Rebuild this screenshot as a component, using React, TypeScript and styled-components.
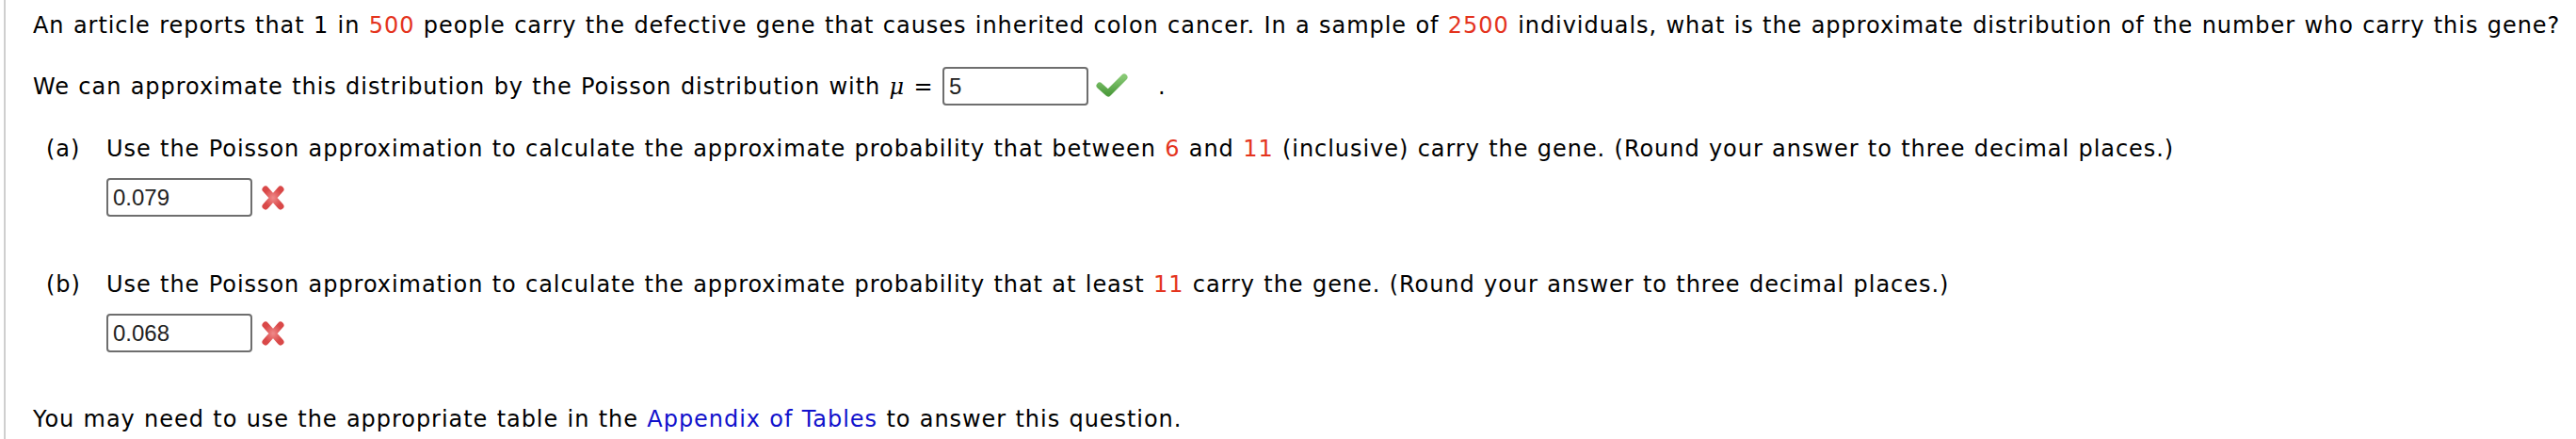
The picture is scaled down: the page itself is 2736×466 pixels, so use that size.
import styled, { createGlobalStyle } from "styled-components"

const GlobalStyle = createGlobalStyle`
    body {
        margin: 0;
        background: #ffffff;
    }
`

const Page = styled.div`
    padding-left: 4px;
    height: 466px;
`

const Panel = styled.div`
    border-left: 2px solid #cfcfcf;
    padding: 13px 0 0 29px;
    height: 466px;
    box-sizing: border-box;
    font-family: "DejaVu Sans", Verdana, sans-serif;
    font-size: 24px;
    line-height: 28px;
    letter-spacing: 0.95px;
    word-spacing: 0.8px;
    color: #000;
`

const Para = styled.p<{ $top?: number }>`
    margin: ${({ $top }) => $top ?? 0}px 0 0 0;
    white-space: nowrap;
`

const Red = styled.span`
    color: #e4341e;
`

const Link = styled.a`
    color: #1111cc;
    text-decoration: none;
`

const Mu = styled.span`
    font-family: "DejaVu Serif", serif;
    font-style: italic;
`

const Period = styled.span`
    margin-left: 32px;
`

const AnswerBox = styled.span`
    display: inline-block;
    box-sizing: border-box;
    width: 155px;
    height: 41px;
    border: 2px solid #6e6e6e;
    border-radius: 4px;
    padding: 0 0 0 5px;
    font-family: "Liberation Sans", Arial, sans-serif;
    font-size: 24px;
    line-height: 37px;
    letter-spacing: normal;
    word-spacing: normal;
    color: #222;
    vertical-align: baseline;
`

const Part = styled.div<{ $top: number }>`
    display: grid;
    grid-template-columns: 64px auto;
    margin: ${({ $top }) => $top}px 0 0 14px;
    white-space: nowrap;
`

const PartLabel = styled.span``

const PartBody = styled.div`
    display: flex;
    flex-flow: column nowrap;
`

const AnswerRow = styled.div`
    display: flex;
    align-items: center;
    gap: 9px;
    margin-top: 17px;
`

const Mark = styled.svg<{ $inline?: boolean }>`
    display: inline-block;
    flex-shrink: 0;
    vertical-align: ${({ $inline }) => ($inline ? "-4px" : "baseline")};
    margin-left: ${({ $inline }) => ($inline ? "8px" : "0")};
`

const CheckIcon = () => (
    <Mark $inline width="34" height="26" viewBox="0 0 34 26">
        <defs>
            <linearGradient id="chk" x1="0" y1="0" x2="0" y2="1">
                <stop offset="0" stopColor="#86c873" />
                <stop offset="1" stopColor="#4f9d3f" />
            </linearGradient>
        </defs>
        <polyline
            points="4,13 13,21 30,4"
            fill="none"
            stroke="url(#chk)"
            strokeWidth="7"
            strokeLinecap="round"
            strokeLinejoin="round"
        />
    </Mark>
)

const CrossIcon = () => (
    <Mark width="26" height="28" viewBox="0 0 26 28">
        <defs>
            <radialGradient id="crs" cx="0.5" cy="0.5" r="0.6">
                <stop offset="0" stopColor="#f08a8a" />
                <stop offset="1" stopColor="#d94848" />
            </radialGradient>
        </defs>
        <path
            d="M5 5 L21 23 M21 5 L5 23"
            fill="none"
            stroke="url(#crs)"
            strokeWidth="7"
            strokeLinecap="round"
        />
    </Mark>
)

export default function App() {
    return (
        <Page>
            <GlobalStyle />
            <Panel>
                <Para>
                    An article reports that 1 in <Red>500</Red> people carry the defective gene
                    that causes inherited colon cancer. In a sample of <Red>2500</Red> individuals,
                    what is the approximate distribution of the number who carry this gene?
                </Para>
                <Para $top={30}>
                    We can approximate this distribution by the Poisson distribution with <Mu>μ</Mu> ={" "}
                    <AnswerBox>5</AnswerBox>
                    <CheckIcon />
                    <Period>.</Period>
                </Para>
                <Part $top={32}>
                    <PartLabel>(a)</PartLabel>
                    <PartBody>
                        <span>
                            Use the Poisson approximation to calculate the approximate probability
                            that between <Red>6</Red> and <Red>11</Red> (inclusive) carry the gene.
                            (Round your answer to three decimal places.)
                        </span>
                        <AnswerRow>
                            <AnswerBox>0.079</AnswerBox>
                            <CrossIcon />
                        </AnswerRow>
                    </PartBody>
                </Part>
                <Part $top={58}>
                    <PartLabel>(b)</PartLabel>
                    <PartBody>
                        <span>
                            Use the Poisson approximation to calculate the approximate probability
                            that at least <Red>11</Red> carry the gene. (Round your answer to three
                            decimal places.)
                        </span>
                        <AnswerRow>
                            <AnswerBox>0.068</AnswerBox>
                            <CrossIcon />
                        </AnswerRow>
                    </PartBody>
                </Part>
                <Para $top={57}>
                    You may need to use the appropriate table in the{" "}
                    <Link href="#">Appendix of Tables</Link> to answer this question.
                </Para>
            </Panel>
        </Page>
    )
}
